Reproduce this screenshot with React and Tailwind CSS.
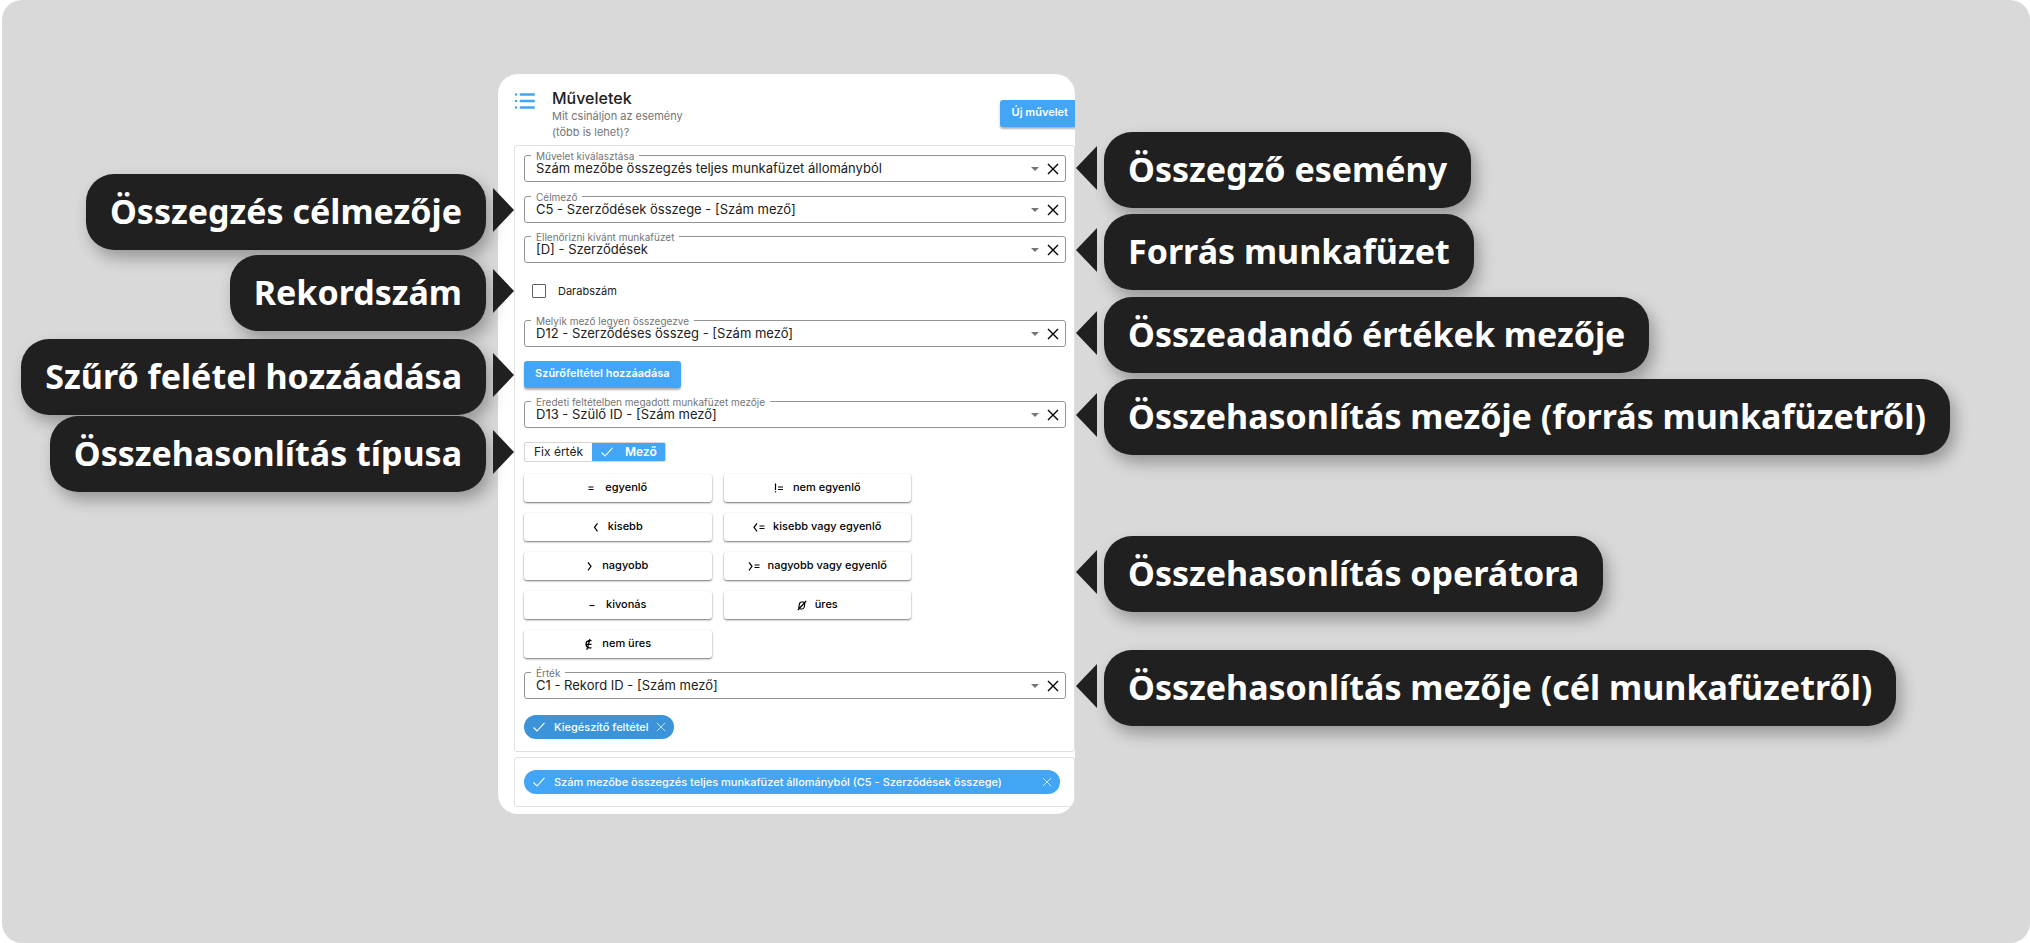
import React, { useState } from "react";

const leftNotes = [
  { text: "Összegzés célmezője", gap: "mt-[174px]" },
  { text: "Rekordszám", gap: "mt-[5px]" },
  { text: "Szűrő felétel hozzáadása", gap: "mt-2" },
  { text: "Összehasonlítás típusa", gap: "mt-px" },
];

const rightNotes = [
  { text: "Összegző esemény", gap: "mt-[132px]" },
  { text: "Forrás munkafüzet", gap: "mt-[6px]" },
  { text: "Összeadandó értékek mezője", gap: "mt-[7px]" },
  { text: "Összehasonlítás mezője (forrás munkafüzetről)", gap: "mt-[6px]" },
  { text: "Összehasonlítás operátora", gap: "mt-[81px]" },
  { text: "Összehasonlítás mezője (cél munkafüzetről)", gap: "mt-[38px]" },
];

const operators = [
  { sign: "eq", label: "egyenlő" },
  { sign: "neq", label: "nem egyenlő" },
  { sign: "lt", label: "kisebb" },
  { sign: "lte", label: "kisebb vagy egyenlő" },
  { sign: "gt", label: "nagyobb" },
  { sign: "gte", label: "nagyobb vagy egyenlő" },
  { sign: "minus", label: "kivonás" },
  { sign: "empty", label: "üres" },
  { sign: "notEmpty", label: "nem üres" },
];

const signs = {
  eq: { w: 9, d: "M0.5 6h5M0.5 8.5h5" },
  neq: { w: 11, d: "M1.5 2.5v6.5M1.5 10.2v1.3M4 6h5M4 8.5h5" },
  lt: { w: 7, d: "M4.5 3.3L1.5 7.3l3 4" },
  lte: { w: 12, d: "M4 3.3L1 7.3l3 4M6.5 6h5M6.5 8.5h5" },
  gt: { w: 7, d: "M1 3.3l3 4-3 4" },
  gte: { w: 12, d: "M1 3.3l3 4-3 4M6.5 6h5M6.5 8.5h5" },
  minus: { w: 9, d: "M0.5 7.5h5" },
  empty: { w: 10, d: "M4.5 4h1.5Q8 4 7.7 6L7.2 9Q6.8 11 5 11H3.5Q1.6 11 1.9 9L2.4 6Q2.8 4 4.5 4zM0.8 12L9.2 3" },
  notEmpty: { w: 10, d: "M7.5 3.7H5Q2 4.2 2 7.3t3 3.6h2.5M2 7.3h5.5M2.8 12.8L6 2" },
};

function Sign({ name }) {
  const { w, d } = signs[name];
  return (
    <svg width={w} height="14" viewBox={`0 0 ${w} 14`} fill="none" stroke="currentColor" strokeWidth="1.2" aria-hidden="true">
      <path d={d} />
    </svg>
  );
}

function Check() {
  return (
    <svg width="12" height="10" viewBox="0 0 12 10" fill="none" stroke="currentColor" strokeWidth="1.1" aria-hidden="true">
      <path d="M0.5 5.5L4 9L11.5 0.8" />
    </svg>
  );
}

function Cross({ size, weight }) {
  return (
    <svg width={size} height={size} viewBox="0 0 12 12" fill="none" stroke="currentColor" strokeWidth={weight} aria-hidden="true">
      <path d="M1 1l10 10M11 1L1 11" />
    </svg>
  );
}

function Note({ text, gap, side }) {
  return (
    <li className={`flex items-start gap-[7px] ${gap} ${side === "right" ? "flex-row-reverse" : ""}`}>
      <div className="flex h-[76px] items-center whitespace-nowrap rounded-[28px] bg-[#202020] px-6 pb-[2px] text-[34px] font-bold leading-none text-white shadow-[5px_8px_16px_rgba(0,0,0,0.3)]">
        {text}
      </div>
      <div
        className={`mt-[14px] h-0 w-0 border-y-[22px] border-y-transparent ${
          side === "right" ? "border-r-[21px] border-r-[#202020]" : "border-l-[21px] border-l-[#202020]"
        }`}
      />
    </li>
  );
}

function SelectField({ id, label, value, gap = "" }) {
  return (
    <div className={`relative flex h-[27px] items-center rounded-[3px] border border-[#949494] pl-[11px] pr-[6px] ${gap}`}>
      <label htmlFor={id} className="absolute -top-[5px] left-[6px] bg-white px-[5px] text-[10px] leading-[10px] text-[#757575]">
        {label}
      </label>
      <select id={id} className="min-w-0 flex-1 appearance-none bg-transparent pb-px text-[13px] leading-4 text-[#212121] outline-none">
        <option>{value}</option>
      </select>
      <svg width="8" height="4" viewBox="0 0 8 4" className="mr-2 text-[#757575]" aria-hidden="true">
        <path d="M0 0h8L4 4z" fill="currentColor" />
      </svg>
      <button type="button" aria-label="Törlés" className="text-black">
        <Cross size={12} weight={1.4} />
      </button>
    </div>
  );
}

export default function App() {
  const [counting, setCounting] = useState(false);

  return (
    <div className="bg-white pl-[2px] font-['Inter',sans-serif]">
      <main className="grid min-h-screen grid-cols-[minmax(0,496fr)_577px_minmax(0,955fr)] items-start rounded-[20px] bg-[#d9d9d9]">
        <ul className="relative z-10 -mr-4 flex flex-col items-end font-['Noto_Sans',sans-serif]">
          {leftNotes.map((note) => (
            <Note key={note.text} {...note} side="left" />
          ))}
        </ul>

        <section className="mt-[74px] overflow-hidden rounded-[20px] bg-white pb-[7px] pl-4">
          <header className="flex h-[71px] items-start pt-[15px]">
            <svg width="21" height="18" viewBox="0 0 21 18" className="mt-[3px] text-[#42a5f5]" stroke="currentColor" strokeWidth="2.4" strokeLinecap="round" aria-hidden="true">
              <path d="M2 2.5h0.1M2 9h0.1M2 15.5h0.1M6.8 2.5h13M6.8 9h13M6.8 15.5h13" />
            </svg>
            <div className="ml-[17px] flex-1">
              <h1 className="text-base font-medium leading-[19px] text-[#212121]">Műveletek</h1>
              <p className="w-[150px] text-[11px] leading-4 text-[#757575]">Mit csináljon az esemény (több is lehet)?</p>
            </div>
            <button type="button" className="mt-[11px] -mr-[5px] h-[27px] rounded-[3px] bg-[#42a5f5] px-3 pb-[2px] text-[11px] font-semibold text-white shadow-[0_2px_2px_rgba(0,0,0,0.3)]">
              Új művelet
            </button>
          </header>

          <div className="rounded-[3px] border border-[#e0e0e0] pb-3 pl-[9px] pr-2 pt-[9px]">
            <SelectField id="muvelet" label="Művelet kiválasztása" value="Szám mezőbe összegzés teljes munkafüzet állományból" />
            <SelectField id="celmezo" label="Célmező" value="C5 - Szerződések összege - [Szám mező]" gap="mt-[14px]" />
            <SelectField id="munkafuzet" label="Ellenőrizni kívánt munkafüzet" value="[D] - Szerződések" gap="mt-[13px]" />

            <label className="mt-5 flex h-4 items-center gap-3 pl-2 text-[11px] text-[#212121]">
              <input
                type="checkbox"
                checked={counting}
                onChange={(e) => setCounting(e.target.checked)}
                className="h-[14px] w-[14px] appearance-none rounded-[1px] border border-[#616161] checked:bg-[#42a5f5]"
              />
              Darabszám
            </label>

            <SelectField id="osszegzett" label="Melyik mező legyen összegezve" value="D12 - Szerződéses összeg - [Szám mező]" gap="mt-[21px]" />

            <button type="button" className="mt-[14px] block h-[27px] rounded-[3px] bg-[#42a5f5] px-[11px] pb-[2px] text-[11px] font-semibold text-white shadow-[0_2px_2px_rgba(0,0,0,0.3)]">
              Szűrőfeltétel hozzáadása
            </button>

            <SelectField id="eredeti" label="Eredeti feltételben megadott munkafüzet mezője" value="D13 - Szülő ID - [Szám mező]" gap="mt-[13px]" />

            <div className="mt-[14px] flex h-5 w-fit overflow-hidden rounded-[2px] border border-[#d6d6d6] text-xs">
              <button type="button" className="px-[9px] text-[#212121]">
                Fix érték
              </button>
              <button type="button" className="-my-px -mr-px flex items-center gap-3 bg-[#42a5f5] px-[9px] font-semibold text-white">
                <Check />
                Mező
              </button>
            </div>

            <div className="mt-3 grid w-[387px] grid-cols-2 gap-x-3 gap-y-[11px]">
              {operators.map((op) => (
                <button
                  key={op.sign}
                  type="button"
                  className="flex h-7 items-center justify-center gap-2 rounded-[3px] bg-white pb-px text-[11px] font-medium text-black shadow-[0_1px_2px_rgba(0,0,0,0.55)]"
                >
                  <Sign name={op.sign} />
                  {op.label}
                </button>
              ))}
            </div>

            <SelectField id="ertek" label="Érték" value="C1 - Rekord ID - [Szám mező]" gap="mt-[14px]" />

            <div className="mt-4 flex h-6 w-fit items-center rounded-full bg-[#3b94d9] pl-[9px] pr-2 text-[11px] font-medium text-white">
              <Check />
              <span className="ml-[9px]">Kiegészítő feltétel</span>
              <button type="button" aria-label="Eltávolítás" className="ml-[7px] text-white/70">
                <Cross size={10} weight={1.2} />
              </button>
            </div>
          </div>

          <div className="mt-[5px] rounded-[3px] border border-[#e0e0e0] px-[9px] py-3">
            <div className="mr-[5px] flex h-6 items-center rounded-full bg-[#42a5f5] pl-[9px] pr-2 text-[11px] font-medium text-white">
              <Check />
              <span className="ml-[9px] flex-1">Szám mezőbe összegzés teljes munkafüzet állományból (C5 - Szerződések összege)</span>
              <button type="button" aria-label="Eltávolítás" className="text-white/70">
                <Cross size={10} weight={1.2} />
              </button>
            </div>
          </div>
        </section>

        <ul className="relative z-10 ml-px flex flex-col items-start font-['Noto_Sans',sans-serif]">
          {rightNotes.map((note) => (
            <Note key={note.text} {...note} side="right" />
          ))}
        </ul>
      </main>
    </div>
  );
}
